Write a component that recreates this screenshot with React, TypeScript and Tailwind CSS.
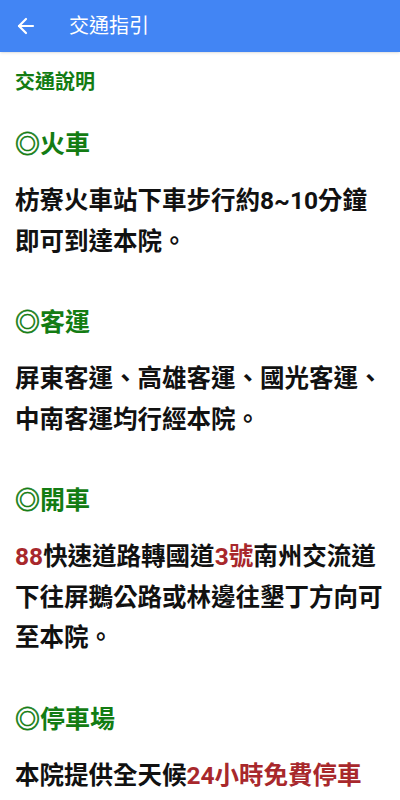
import { ArrowLeft } from "lucide-react";

const green = "text-[#137c13]";
const red = "text-[#a8282c]";

function Heading({ text }: { text: string }) {
  return (
    <h3
      className={`text-[25px] font-bold leading-[36px] ${green}`}
      style={{ fontFamily: '"Noto Sans CJK TC", sans-serif' }}
    >
      <span className="[-webkit-text-stroke:0.6px_#137c13]">◎</span>
      {text}
    </h3>
  );
}

function Body({ children }: { children: React.ReactNode }) {
  return (
    <p className="mt-[21px] text-[24.5px] font-bold leading-[40.5px] text-[#111]">
      {children}
    </p>
  );
}

export default function App() {
  return (
    <div
      className="min-h-screen bg-white"
      style={{ fontFamily: 'Roboto, "Noto Sans CJK TC", "Noto Sans", sans-serif' }}
    >
      <div className="flex h-[52px] items-center bg-[#4285f4] shadow-sm">
        <ArrowLeft className="ml-[14px] h-[24px] w-[24px] text-white" strokeWidth={2.2} />
        <span className="ml-[31px] text-[20px] leading-none text-white">交通指引</span>
      </div>

      <div className="px-[15px] pt-[15px]">
        <h2 className={`text-[20px] font-bold leading-[30px] ${green}`}>交通說明</h2>

        <div className="mt-[27px]">
          <Heading text="火車" />
          <Body>枋寮火車站下車步行約8~10分鐘即可到達本院。</Body>
        </div>

        <div className="mt-[40px]">
          <Heading text="客運" />
          <Body>屏東客運、高雄客運、國光客運、中南客運均行經本院。</Body>
        </div>

        <div className="mt-[40px]">
          <Heading text="開車" />
          <Body>
            <span className={red}>88</span>快速道路轉國道<span className={red}>3號</span>
            南州交流道下往屏鵝公路或林邊往墾丁方向可至本院。
          </Body>
        </div>

        <div className="mt-[40px]">
          <Heading text="停車場" />
          <Body>
            本院提供全天候<span className={red}>24小時免費停車</span>
          </Body>
        </div>
      </div>
    </div>
  );
}
